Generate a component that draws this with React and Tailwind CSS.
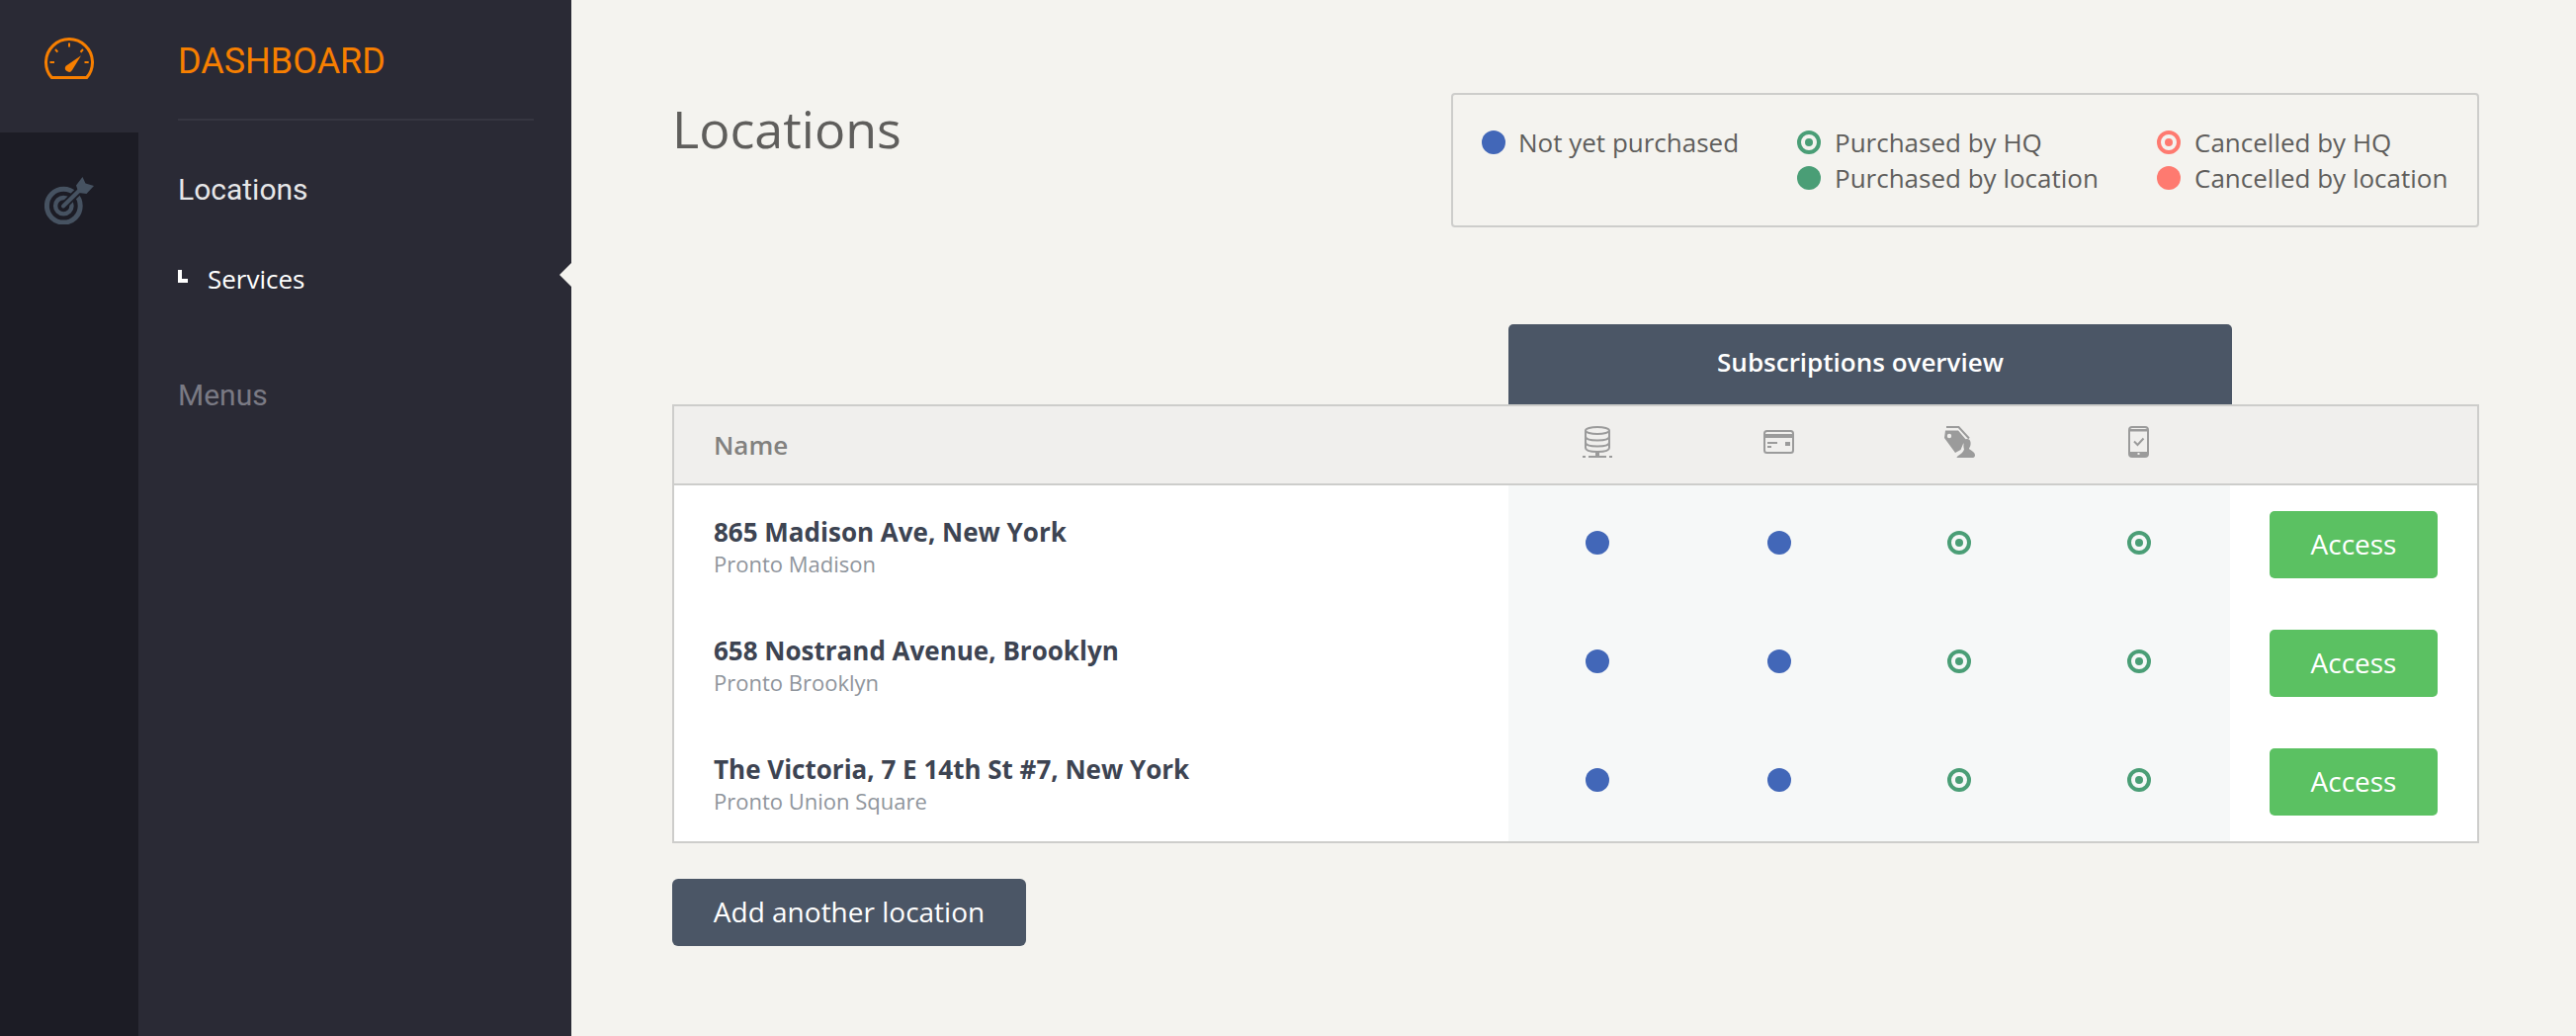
const OS = "font-['Open_Sans',sans-serif]";
const RB = "font-['Roboto',sans-serif]";

function Dot({ kind }) {
  if (kind === 'blue') return <span className="block h-6 w-6 shrink-0 rounded-full bg-[#4267b8]" />;
  if (kind === 'green') return <span className="block h-6 w-6 shrink-0 rounded-full bg-[#4a9e76]" />;
  if (kind === 'red') return <span className="block h-6 w-6 shrink-0 rounded-full bg-[#fe7a70]" />;
  if (kind === 'greenRing')
    return (
      <span className="flex h-6 w-6 shrink-0 items-center justify-center rounded-full border-4 border-[#4a9e76]">
        <span className="block h-2 w-2 rounded-full bg-[#4a9e76]" />
      </span>
    );
  return (
    <span className="flex h-6 w-6 shrink-0 items-center justify-center rounded-full border-4 border-[#fe7a70]">
      <span className="block h-2 w-2 rounded-full bg-[#fe7a70]" />
    </span>
  );
}

function LegendItem({ kind, label, className = 'gap-[14px]' }) {
  return (
    <div className={`flex h-9 items-center ${className}`}>
      <Dot kind={kind} />
      <span className="whitespace-nowrap text-[26px] leading-9 text-[#5f5e5c]">{label}</span>
    </div>
  );
}

function GaugeIcon() {
  return (
    <svg width="50" height="42" viewBox="0 0 50 42" fill="none" stroke="#f77f00" strokeWidth="3">
      <path d="M7.3 40.5A23.5 23.5 0 1 1 42.7 40.5Z" strokeLinejoin="round" />
      <path d="M25 5.5V9.5M5.5 25H10M40.5 25H44.7M11 12L13.3 14.7M36.5 14.7L39 12" strokeWidth="2" />
      <path d="M37 18.2L28 33A3.8 3.8 0 0 1 21.6 28.8Z" fill="#f77f00" stroke="none" />
    </svg>
  );
}

function TargetIcon() {
  return (
    <svg width="50" height="48" viewBox="0 0 50 48" fill="none">
      <circle cx="19.3" cy="29.2" r="16.9" stroke="#465261" strokeWidth="5" />
      <circle cx="19.3" cy="29.2" r="8.2" stroke="#465261" strokeWidth="4.4" />
      <path d="M19 29.5L38 11" stroke="#1c1c25" strokeWidth="8" />
      <path d="M19 29.5L38 11" stroke="#465261" strokeWidth="4" strokeLinecap="round" />
      <path d="M32 8.5L38.5 0L41.5 6.5L50 9L42.5 17L34.5 16Z" fill="#465261" />
    </svg>
  );
}

function DbIcon() {
  return (
    <svg width="30" height="32" viewBox="0 0 30 32" fill="none" stroke="#9b9b9b" strokeWidth="2">
      <ellipse cx="15" cy="4.5" rx="12" ry="3.5" />
      <path d="M3 4.5V22C3 24.5 8 26 15 26S27 24.5 27 22V4.5" />
      <path d="M3 10.5C3 13 8 14.5 15 14.5S27 13 27 10.5M3 16.5C3 19 8 20.5 15 20.5S27 19 27 16.5" />
      <path d="M15 26V30" strokeWidth="4" />
      <path d="M0 31H3M6 31H24M27 31H30" />
    </svg>
  );
}

function CardIcon() {
  return (
    <svg width="31" height="24" viewBox="0 0 31 24" fill="none">
      <rect x="1" y="1" width="29" height="22" rx="2.5" stroke="#9b9b9b" strokeWidth="2" />
      <rect x="1" y="4" width="29" height="4" fill="#9b9b9b" />
      <rect x="4" y="12" width="10" height="2" fill="#9b9b9b" />
      <rect x="4" y="16" width="4" height="2" fill="#9b9b9b" />
      <rect x="22" y="12" width="5" height="4" fill="#9b9b9b" />
    </svg>
  );
}

function TagIcon() {
  return (
    <svg width="32" height="32" viewBox="0 0 32 32" fill="none">
      <path d="M2 4.5L15 4.5L24 15L20 18L17.5 24L12 27L1 12Z" fill="#9b9b9b" />
      <circle cx="6" cy="10" r="2.2" fill="#f0efed" />
      <path d="M3 1H15.5L26 12.5" stroke="#9b9b9b" strokeWidth="2" />
      <path d="M24 13C27 13 28 16 27.5 19C27.3 21 26 22 26 23C28 25 32 26 32 29.5C32 31 31 32 30 32H14C13 32 13.5 31 15 30C18 28 20.5 26 21 23.5C20 21 20 13 24 13Z" fill="#9b9b9b" />
    </svg>
  );
}

function PhoneIcon() {
  return (
    <svg width="21" height="32" viewBox="0 0 21 32" fill="none">
      <rect x="1" y="1" width="19" height="30" rx="3" stroke="#9b9b9b" strokeWidth="2" />
      <rect x="1" y="3" width="19" height="2.5" fill="#9b9b9b" />
      <rect x="1" y="26" width="19" height="4" fill="#9b9b9b" />
      <rect x="9.5" y="27" width="2" height="2" fill="#f0efed" />
      <path d="M6 15.5L9.5 19L15.5 12.5" stroke="#9b9b9b" strokeWidth="2" />
    </svg>
  );
}

const rows = [
  ['865 Madison Ave, New York', 'Pronto Madison'],
  ['658 Nostrand Avenue, Brooklyn', 'Pronto Brooklyn'],
  ['The Victoria, 7 E 14th St #7, New York', 'Pronto Union Square'],
];

function Sidebar() {
  return (
    <aside className="relative flex h-full w-[578px] shrink-0 bg-[#2a2a35]">
      <div className="flex w-[140px] shrink-0 flex-col">
        <div className="flex h-[134px] items-start justify-center pt-[38px]">
          <GaugeIcon />
        </div>
        <div className="flex flex-1 justify-center bg-[#1c1c25] pt-[45px]">
          <TargetIcon />
        </div>
      </div>
      <nav className={`flex-1 pl-[40px] pr-[38px] ${RB}`}>
        <div className="flex h-[122px] items-center border-b-2 border-[#363641] pt-[3px] text-[36px] leading-none text-[#f77f00]">
          DASHBOARD
        </div>
        <div className="mt-[52px] text-[30px] leading-9 text-[#e6e6e8]">Locations</div>
        <div className="mt-[54px] flex h-9 items-center">
          <span className="mb-[6px] block h-[13px] w-[10px] border-b-4 border-l-4 border-white" />
          <span className={`ml-[20px] text-[26px] leading-9 text-white ${OS}`}>Services</span>
        </div>
        <div className="mt-[82px] text-[30px] leading-9 text-[#7a7a84]">Menus</div>
      </nav>
      <span className="absolute right-0 top-[266px] h-6 w-3 bg-[#f4f3ef] [clip-path:polygon(100%_0,0_50%,100%_100%)]" />
    </aside>
  );
}

export default function App() {
  return (
    <div className={`flex h-[1048px] w-[2606px] overflow-hidden bg-[#f4f3ef] ${OS}`}>
      <Sidebar />
      <main className="flex-1 pl-[102px] pr-[98px] pt-[94px]">
        <header className="flex items-start justify-between">
          <h1 className="mt-[4px] text-[52px] font-normal leading-[64px] text-[#5f5e5c]">Locations</h1>
          <div className="grid h-[136px] w-[1040px] grid-cols-[319px_364px_1fr] content-start rounded-[4px] border-2 border-[#cdcdcb] pl-[29px] pt-[30px]">
            <LegendItem kind="blue" label="Not yet purchased" className="gap-[13px]" />
            <LegendItem kind="greenRing" label="Purchased by HQ" />
            <LegendItem kind="redRing" label="Cancelled by HQ" />
            <LegendItem kind="green" label="Purchased by location" className="col-start-2 gap-[14px]" />
            <LegendItem kind="red" label="Cancelled by location" />
          </div>
        </header>

        <div className="ml-[846px] mt-[98px] flex h-[81px] w-[732px] items-center justify-center rounded-t-[5px] bg-[#4b5666] pb-[4px] pr-[20px] text-[26px] font-semibold text-white">
          Subscriptions overview
        </div>

        <section className="border-2 border-[#cdcdcb] bg-white">
          <div className="grid h-[80px] grid-cols-[844px_182px_183px_182px_183px_1fr] items-center border-b-2 border-[#cdcdcb] bg-[#f0efed]">
            <div className="pl-[40px] text-[26px] font-semibold text-[#82817f]">Name</div>
            <div className="flex justify-center pb-[6px] pr-[2px]"><DbIcon /></div>
            <div className="flex justify-center pb-[6px]"><CardIcon /></div>
            <div className="flex justify-center pb-[6px]"><TagIcon /></div>
            <div className="flex justify-center pb-[6px] pr-[2px]"><PhoneIcon /></div>
            <div />
          </div>
          {rows.map(([name, sub]) => (
            <div key={name} className="grid h-[120px] grid-cols-[844px_182px_183px_182px_183px_1fr] items-stretch">
              <div className="flex flex-col justify-center pl-[40px] pt-[2px]">
                <div className="text-[26px] font-bold leading-9 text-[#3d4452]">{name}</div>
                <div className="text-[22px] leading-7 text-[#8f959c]">{sub}</div>
              </div>
              <div className="flex items-center justify-center bg-[#f6f8f8] pb-[4px] pr-[2px]"><Dot kind="blue" /></div>
              <div className="flex items-center justify-center bg-[#f6f8f8] pb-[4px]"><Dot kind="blue" /></div>
              <div className="flex items-center justify-center bg-[#f6f8f8] pb-[4px]"><Dot kind="greenRing" /></div>
              <div className="flex items-center justify-center bg-[#f6f8f8] pb-[4px] pr-[2px]"><Dot kind="greenRing" /></div>
              <div className="flex items-center justify-end pr-[40px]">
                <button className="h-[68px] w-[170px] rounded-[5px] bg-[#5bc162] pb-[2px] text-[28px] text-white">Access</button>
              </div>
            </div>
          ))}
        </section>

        <button className="mt-[36px] h-[68px] w-[358px] rounded-[6px] bg-[#4b5666] pb-[2px] text-[28px] text-white">
          Add another location
        </button>
      </main>
    </div>
  );
}
